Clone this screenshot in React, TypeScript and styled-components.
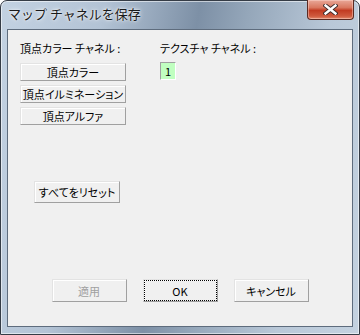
import React from 'react'
import styled, { createGlobalStyle } from 'styled-components'

const GlobalStyle = createGlobalStyle`
    html, body {
        margin: 0;
        padding: 0;
        background: #ffffff;
        overflow: hidden;
    }
`

const uiFont = `'Noto Sans CJK JP', 'Noto Sans', sans-serif`

const Window = styled.div`
    box-sizing: border-box;
    width: 360px;
    height: 335px;
    display: flex;
    flex-direction: column;
    padding: 0 6px 7px 6px;
    border: 1px solid #353c46;
    border-radius: 7px 7px 0 0;
    background: linear-gradient(
        100deg,
        #c3d2e2 0%,
        #b3c3d5 25%,
        #7d90a6 48%,
        #95a7ba 60%,
        #b9c8d8 80%,
        #c4d2e0 100%
    );
    box-shadow: inset 0 0 0 1px rgba(255, 255, 255, 0.55);
    font-family: ${uiFont};
`

const TitleBar = styled.div`
    height: 28px;
    display: flex;
    align-items: flex-start;
    justify-content: space-between;
`

const Title = styled.div`
    padding: 4px 0 0 1px;
    font-size: 13px;
    line-height: 17px;
    color: #1a1a1a;
    text-shadow: 0 0 5px rgba(255, 255, 255, 0.9), 0 0 2px rgba(255, 255, 255, 0.9);
`

const CloseButton = styled.div`
    box-sizing: border-box;
    width: 47px;
    height: 20px;
    margin-top: -1px;
    margin-right: -1px;
    display: flex;
    align-items: center;
    justify-content: center;
    border: 1px solid #5b2a22;
    border-top: none;
    border-radius: 0 0 4px 4px;
    background: linear-gradient(
        180deg,
        #e9a898 0%,
        #d9775f 40%,
        #c23b22 55%,
        #cf5a3e 85%,
        #e48a6c 100%
    );
    box-shadow: inset 0 0 0 1px rgba(255, 220, 210, 0.45);
`

const Client = styled.div`
    flex: 1;
    display: flex;
    flex-direction: column;
    background: #f0f0f0;
    border: 1px solid #5e6c7d;
    font-size: 11px;
    line-height: 14px;
    color: #000;
    font-feature-settings: 'palt';
`

const Columns = styled.div`
    display: flex;
    padding: 11px 0 0 12px;
`

const LeftColumn = styled.div`
    width: 140px;
    display: flex;
    flex-direction: column;
`

const RightColumn = styled.div`
    display: flex;
    flex-direction: column;
`

const Label = styled.div`
    height: 14px;
    margin-bottom: 8px;
    white-space: nowrap;
`

const ButtonStack = styled.div`
    display: flex;
    flex-direction: column;
    gap: 4px;
`

const Button = styled.div<{ $w: number; $h: number; $disabled?: boolean; $focused?: boolean }>`
    box-sizing: border-box;
    width: ${(p) => p.$w}px;
    height: ${(p) => p.$h}px;
    display: flex;
    align-items: center;
    justify-content: center;
    white-space: nowrap;
    background: #f0f0f0;
    border: 1px solid;
    border-color: #e3e3e3 #a0a0a0 #a0a0a0 #e3e3e3;
    box-shadow: inset 1px 1px 0 #ffffff;
    color: ${(p) => (p.$disabled ? '#a0a0a0' : '#000')};
    outline: ${(p) => (p.$focused ? '1px dotted #000' : 'none')};
    outline-offset: -2px;
`

const ResetRow = styled.div`
    margin-top: 56px;
    padding-left: 14px;
`

const ChannelBox = styled.div`
    box-sizing: border-box;
    width: 16px;
    height: 18px;
    margin-top: -1px;
    display: flex;
    align-items: center;
    justify-content: center;
    background: #c0ffc0;
    border: 1px solid;
    border-color: #a0a0a0 #ffffff #ffffff #a0a0a0;
`

const Footer = styled.div`
    margin-top: auto;
    padding-bottom: 24px;
    display: flex;
    justify-content: center;
    gap: 16px;
`

const CloseIcon = () => (
    <svg width="15" height="11" viewBox="0 0 15 11">
        <path d="M2.5 1.5 L12.5 9.5 M12.5 1.5 L2.5 9.5" stroke="#3b2a2a" strokeWidth="4.2" strokeLinecap="square" />
        <path d="M2.5 1.5 L12.5 9.5 M12.5 1.5 L2.5 9.5" stroke="#ffffff" strokeWidth="2.4" strokeLinecap="square" />
    </svg>
)

const App: React.FC = () => {
    const vertexButtons = ['頂点カラー', '頂点イルミネーション', '頂点アルファ']

    return (
        <>
            <GlobalStyle />
            <Window>
                <TitleBar>
                    <Title>マップ チャネルを保存</Title>
                    <CloseButton>
                        <CloseIcon />
                    </CloseButton>
                </TitleBar>
                <Client>
                    <Columns>
                        <LeftColumn>
                            <Label>頂点カラー チャネル :</Label>
                            <ButtonStack>
                                {vertexButtons.map((label) => (
                                    <Button key={label} $w={106} $h={18}>
                                        {label}
                                    </Button>
                                ))}
                            </ButtonStack>
                            <ResetRow>
                                <Button $w={86} $h={22}>すべてをリセット</Button>
                            </ResetRow>
                        </LeftColumn>
                        <RightColumn>
                            <Label>テクスチャ チャネル :</Label>
                            <ChannelBox>1</ChannelBox>
                        </RightColumn>
                    </Columns>
                    <Footer>
                        <Button $w={75} $h={23} $disabled>適用</Button>
                        <Button $w={75} $h={23} $focused>OK</Button>
                        <Button $w={75} $h={23}>キャンセル</Button>
                    </Footer>
                </Client>
            </Window>
        </>
    )
}

export default App
